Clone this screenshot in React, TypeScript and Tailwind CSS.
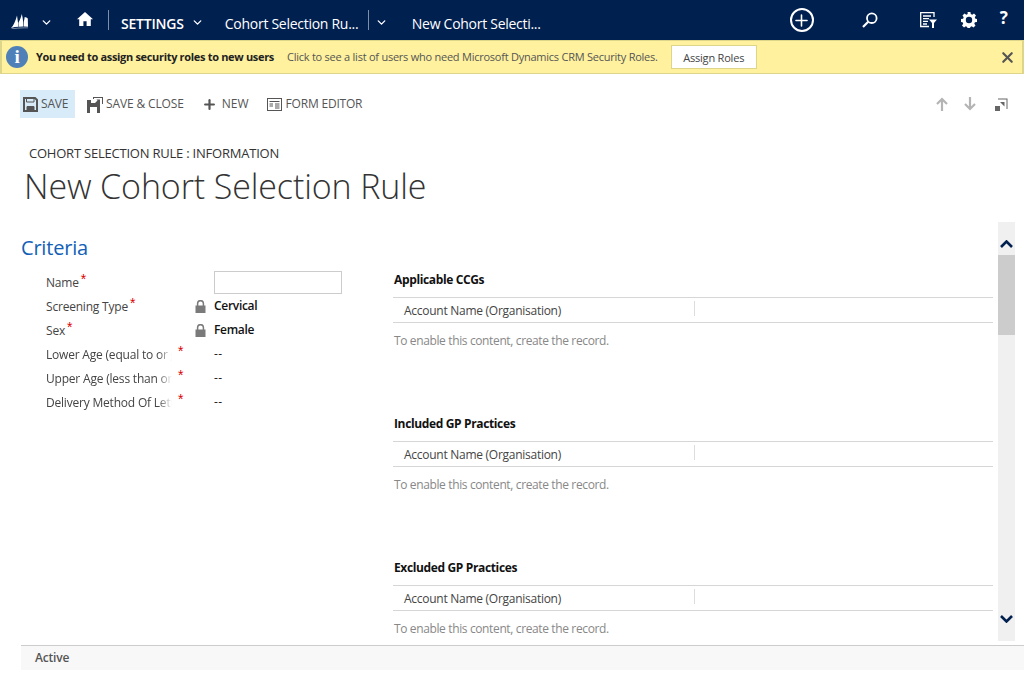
import { ChevronDown, Plus, X } from "lucide-react";

const fields = [
  { label: "Name", star: "ml-[2px]", kind: "input" },
  { label: "Screening Type", star: "ml-[2px]", value: "Cervical", locked: true },
  { label: "Sex", star: "ml-[2px]", value: "Female", locked: true },
  { label: "Lower Age (equal to or greater than)", clip: true, value: "--" },
  { label: "Upper Age (less than or equal to)", clip: true, value: "--" },
  { label: "Delivery Method Of Letter", clip: true, value: "--" },
];

const grids = ["Applicable CCGs", "Included GP Practices", "Excluded GP Practices"];

function LockIcon() {
  return (
    <svg width="11" height="13" viewBox="0 0 11 13" className="-ml-[1px] mt-[1px]">
      <path d="M2.6 6V3.6a2.9 2.9 0 0 1 5.8 0V6" fill="none" stroke="#7a7a7a" strokeWidth="1.5" />
      <rect x="0.5" y="5.5" width="10" height="7.5" fill="#7a7a7a" />
    </svg>
  );
}

function Field({ field }: { field: (typeof fields)[number] }) {
  return (
    <div className="flex h-6 items-center">
      <div className="flex w-[150px] items-center text-[12px] text-[#444]">
        {field.clip ? (
          <span className="w-[126px] overflow-hidden whitespace-nowrap pt-[2px] [mask-image:linear-gradient(to_right,black_112px,transparent_126px)]">
            {field.label}
          </span>
        ) : (
          <span className="whitespace-nowrap pt-[2px]">{field.label}</span>
        )}
        <span className={`${field.clip ? "ml-[6px]" : field.star} -mt-[6px] font-['Liberation_Sans',sans-serif] text-[14px] leading-none text-[#e00000]`}>*</span>
      </div>
      <div className="flex w-[18px] justify-start">{field.locked && <LockIcon />}</div>
      {field.kind === "input" ? (
        <input className="h-[23px] w-[128px] border border-[#cccccc] bg-white" />
      ) : (
        <span className={`text-[12px] ${field.locked ? "font-semibold tracking-[-0.3px] text-[#111]" : "tracking-[0.5px] text-[#222]"}`}>{field.value}</span>
      )}
    </div>
  );
}

function SubGrid({ title }: { title: string }) {
  return (
    <div className="h-[144px]">
      <div className="h-[28px] pl-[1px] pt-[2px] text-[12px] font-bold leading-[18px] tracking-[-0.36px] text-[#111]">{title}</div>
      <div className="flex h-[26px] items-center border-y border-[#d6d6d6] pl-[11px] text-[12px] tracking-[-0.27px] text-[#444]">
        <span className="w-[290px] whitespace-nowrap pt-[2px]">Account Name (Organisation)</span>
        <span className="-mt-[4px] h-[15px] w-px bg-[#dddddd]" />
      </div>
      <div className="pl-[1px] pt-[9px] text-[12px] leading-[18px] tracking-[-0.37px] text-[#888]">To enable this content, create the record.</div>
    </div>
  );
}

export default function App() {
  return (
    <div className="h-[673px] w-[1024px] overflow-hidden bg-white font-['Open_Sans',sans-serif] tracking-[-0.2px]">
      {/* top nav */}
      <div className="flex h-10 items-center bg-[#002050] text-white">
        <svg width="17" height="15" viewBox="0 0 17 15" className="ml-[11px] mt-[2px]" fill="white">
          <path d="M0 14 C2.500 12 4.500 7 6 1.500 L7.600 12.800 C5 12.800 2.500 13.200 0 14 Z" />
          <path d="M7.400 9 C8.800 6 10 3.500 10.800 0 C11.800 4 12.300 8 12.500 12.600 L8 12.700 Z" />
          <path d="M12.800 8 C13.200 6 13.500 4.500 13.700 3 C15 3.200 16 3.800 16.800 4.600 L17 12.800 L13 12.600 Z" />
          <path d="M0.500 14.400 C6 13.300 12 13.300 17 13.500 L17 14.200 C12 14 6 14.200 0.500 15 Z" opacity="0.6" />
        </svg>
        <ChevronDown size={13} strokeWidth={2.5} className="ml-[12px] mt-[4px]" />
        <svg width="16" height="14" viewBox="0 0 16 14" className="ml-[24px] -mt-[2px]" fill="white">
          <path d="M8 0 L16 7.2 L13.8 7.2 L13.8 14 L9.6 14 L9.6 9.2 L6.4 9.2 L6.4 14 L2.2 14 L2.2 7.2 L0 7.2 Z" />
        </svg>
        <span className="ml-[15px] h-[20px] w-px bg-[#7f8fa8]" />
        <span className="ml-[12px] pt-[6px] text-[14px] font-semibold">SETTINGS</span>
        <ChevronDown size={13} strokeWidth={2.5} className="ml-[7px] mt-[5px]" />
        <span className="ml-[21px] w-[134px] whitespace-nowrap pt-[6px] text-[14px] tracking-[-0.28px]">Cohort Selection Ru...</span>
        <span className="ml-[9px] h-[20px] w-px bg-[#7f8fa8]" />
        <ChevronDown size={13} strokeWidth={2.5} className="ml-[6px] mt-[5px]" />
        <span className="ml-[24px] w-[130px] whitespace-nowrap pt-[6px] text-[14px] tracking-[-0.28px]">New Cohort Selecti...</span>
        <span className="ml-[248px] flex h-6 w-6 items-center justify-center rounded-full border-2 border-white">
          <Plus size={19} strokeWidth={2} />
        </span>
        <svg width="16" height="16" viewBox="0 0 16 16" className="ml-[48px]" fill="none" stroke="white" strokeWidth="1.8">
          <circle cx="9.8" cy="6.2" r="4.8" />
          <path d="M6.2 9.8 L1 15" strokeWidth="2.2" />
        </svg>
        <svg width="17" height="16" viewBox="0 0 17 16" className="ml-[42px]" fill="none" stroke="white" strokeWidth="1.3">
          <path d="M14 5 V0.7 H0.7 V14.5 H9" />
          <path d="M3 4 H11 M3 6.7 H9 M3 9.4 H8 M3 12 H7" />
          <path d="M9 7.5 H17 L14 11 V16 H12 V11 Z" fill="white" stroke="none" />
        </svg>
        <svg width="16" height="16" viewBox="0 0 16 16" className="ml-[24px]" fill="white">
          <path fillRule="evenodd" d="M6.6 0h2.8l.4 2.1 1.4.6 1.8-1.2 2 2-1.2 1.8.6 1.4L16 7.1v2.8l-2.1.4-.6 1.4 1.2 1.8-2 2-1.8-1.2-1.4.6-.4 2.1H6.6l-.4-2.1-1.4-.6-1.8 1.2-2-2 1.2-1.8-.6-1.4L0 9.9V7.1l2.1-.4.6-1.4L1.5 3.500l2-2 1.8 1.2 1.4-.6zM8 4.800a3.200 3.200 0 1 0 0 6.400 3.200 3.200 0 0 0 0-6.400z" />
        </svg>
        <span className="ml-[23px] -mt-[5px] text-[17px] font-bold">?</span>
      </div>

      {/* notification */}
      <div className="flex h-[34px] items-center border-y border-l-2 border-r-2 border-[#dcd58a] bg-[#fff19d] text-[11px]">
        <span className="ml-[4px] flex h-[22px] w-[22px] items-center justify-center rounded-full bg-[#4f81b8] font-['Liberation_Serif',serif] text-[19px] font-bold text-white">i</span>
        <span className="ml-[8px] font-bold tracking-[-0.32px] text-[#222]">You need to assign security roles to new users</span>
        <span className="ml-[13px] whitespace-nowrap tracking-[-0.24px] text-[#555]">Click to see a list of users who need Microsoft Dynamics CRM Security Roles.</span>
        <button className="ml-[13px] h-6 w-[86px] border border-[#dcd58a] bg-white pt-[2px] text-[11px] text-[#444]">Assign Roles</button>
        <X size={17} strokeWidth={3} className="ml-auto mr-[6px] text-[#555]" />
      </div>

      {/* command bar */}
      <div className="mt-4 flex h-7 items-center pl-5 pr-[16px] text-[12px] text-[#555]">
        <div className="flex h-7 w-[55px] items-center gap-[3px] bg-[#d7ebf9] pl-[3px]">
          <svg width="15" height="15" viewBox="0 0 15 15" fill="none" stroke="#555" strokeWidth="2">
            <path d="M1 1h11l2 2v11H1z" />
            <path d="M3.500 1.500v3.500h7.500V1.500" strokeWidth="1" />
            <path d="M4 14V9.500h7V14" fill="#555" strokeWidth="1" />
          </svg>
          <span>SAVE</span>
        </div>
        <svg width="16" height="17" viewBox="0 0 16 17" className="ml-3" fill="#555">
          <path fillRule="evenodd" d="M0 4h4v3h6v-1h3v11H0zM3 11v6h7v-6z" />
          <path d="M6 1h10v7h-1V2H7v1H6z" />
          <path d="M8 7l2.500-2.500-1-1H13v3.500l-1-1-2.500 2.500z" />
        </svg>
        <span className="ml-[3px] tracking-[-0.13px]">SAVE &amp; CLOSE</span>
        <Plus size={15} strokeWidth={3.5} className="ml-[18px]" />
        <span className="ml-[5px] tracking-[0px]">NEW</span>
        <svg width="15" height="13" viewBox="0 0 15 13" className="ml-[18px]" fill="none" stroke="#555">
          <rect x="0.5" y="0.5" width="14" height="12" />
          <path d="M2.500 3.500H12.500M2.500 6H6M8 6H12.500M2.500 8H6M8 8H12.500M8 10H12.500" />
        </svg>
        <span className="ml-[4px]">FORM EDITOR</span>
        <svg width="12" height="14" viewBox="0 0 12 14" className="ml-auto" fill="none" stroke="#b4b4b4" strokeWidth="2.200">
          <path d="M6 14V2M1 7l5-5 5 5" />
        </svg>
        <svg width="12" height="14" viewBox="0 0 12 14" className="ml-4" fill="none" stroke="#b4b4b4" strokeWidth="2.200">
          <path d="M6 0v12M1 7l5 5 5-5" />
        </svg>
        <svg width="13" height="13" viewBox="0 0 13 13" className="ml-[19px]" fill="#666">
          <path d="M3 0.500H12.500V11H11.500V1.500H3z" />
          <path d="M0 8h5v5H0zM5 4h4.500v4.500z" />
        </svg>
      </div>

      {/* form header */}
      <div className="mt-[26px] pl-[29px] text-[13px] leading-[18px] tracking-[-0.22px] text-[#333]">COHORT SELECTION RULE : INFORMATION</div>
      <div className="ml-6 mt-[2px] whitespace-nowrap text-[34px] font-light leading-[44px] tracking-[-0.12px] text-[#333]">New Cohort Selection Rule</div>

      {/* body */}
      <div className="mt-[14px] flex h-[419px] pl-[21px]">
        <div className="w-[372px]">
          <div className="mt-[12px] text-[20px] leading-[27px] text-[#1160b7]">Criteria</div>
          <div className="mt-[9px] pl-[25px]">
            {fields.map((field) => (
              <Field key={field.label} field={field} />
            ))}
          </div>
        </div>
        <div className="mt-[47px] h-[372px] w-[600px] overflow-hidden">
          {grids.map((title) => (
            <SubGrid key={title} title={title} />
          ))}
        </div>
        <div className="ml-[5px] flex h-[419px] w-[17px] flex-col bg-[#f0f0f0]">
          <div className="flex h-[33px] items-end justify-center pb-[7px]">
            <svg width="13" height="8" viewBox="0 0 13 8" fill="none" stroke="#002050" strokeWidth="2.600">
              <path d="M1 7l5.500-5.500L12 7" />
            </svg>
          </div>
          <div className="h-[80px] bg-[#cccccc]" />
          <div className="mt-auto flex h-[44px] items-center justify-center">
            <svg width="13" height="8" viewBox="0 0 13 8" fill="none" stroke="#002050" strokeWidth="2.600">
              <path d="M1 1l5.500 5.500L12 1" />
            </svg>
          </div>
        </div>
      </div>

      {/* footer */}
      <div className="ml-[21px] mt-[4px] flex h-[25px] items-center border-t border-[#cccccc] bg-[#f8f8f8] pl-[14px] text-[12px] font-semibold text-[#555]">
        Active
      </div>
    </div>
  );
}
